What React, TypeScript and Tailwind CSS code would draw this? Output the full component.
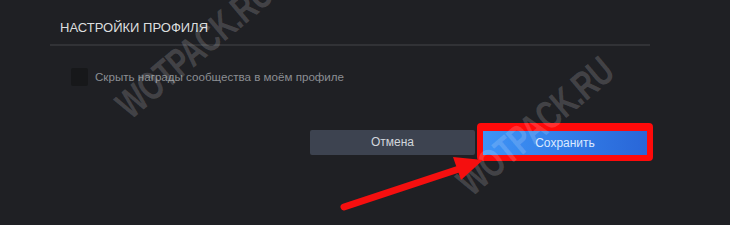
import React from 'react';

function Watermark({ className }: { className: string }) {
  return (
    <span
      className={
        'pointer-events-none absolute -translate-x-1/2 -translate-y-1/2 -rotate-[40deg] scale-x-[0.72] whitespace-nowrap text-[40px] font-bold leading-none tracking-[-1px] text-white/[0.17] ' +
        className
      }
      style={{ fontFamily: '"Liberation Sans", Arial, sans-serif' }}
    >
      WOTPACK.RU
    </span>
  );
}

export default function App() {
  return (
    <div
      className="relative h-[225px] w-[730px] overflow-hidden bg-[#1f2024]"
      style={{ fontFamily: '"Liberation Sans", Arial, sans-serif' }}
    >
      <div className="pl-[50px] pt-[20px]">
        {/* Section header */}
        <div className="w-[600px]">
          <h2 className="border-b-2 border-[#313236] px-[10px] pb-[8px] text-[13px] leading-[16px] text-[#dcdedf]">
            НАСТРОЙКИ ПРОФИЛЯ
          </h2>
        </div>

        {/* Checkbox row */}
        <label className="mt-[22px] flex items-center pl-[21px]">
          <span className="h-[18px] w-[17px] rounded-[2px] bg-[#17181a]" />
          <span className="ml-[7px] text-[11.6px] leading-[16px] text-[#8b8e93]">
            Скрыть награды сообщества в моём профиле
          </span>
        </label>

        {/* Buttons */}
        <div className="mt-[37px] flex items-center pl-[260px]">
          <button className="h-[25px] w-[165px] rounded-[2px] bg-[#3d4350] text-[12px] text-[#d2d6dc]">
            Отмена
          </button>
          <div className="ml-[2px] rounded-[4px] border-[6px] border-t-[8px] border-[#ff0a0a]">
            <button className="block h-[24px] w-[164px] bg-gradient-to-r from-[#3e94f6] to-[#2966d8] text-[12px] text-[#dbe9ff]">
              Сохранить
            </button>
          </div>
        </div>
      </div>

      {/* Watermarks */}
      <Watermark className="left-[194px] top-[49px]" />
      <Watermark className="left-[535px] top-[126px]" />

      {/* Annotation arrow */}
      <svg className="pointer-events-none absolute left-0 top-0" width="730" height="225" viewBox="0 0 730 225">
        <line x1="344" y1="207" x2="462" y2="168" stroke="#f50f0f" strokeWidth="7" strokeLinecap="round" />
        <polygon points="483,160 461,180 453,157" fill="#f50f0f" />
      </svg>
    </div>
  );
}
